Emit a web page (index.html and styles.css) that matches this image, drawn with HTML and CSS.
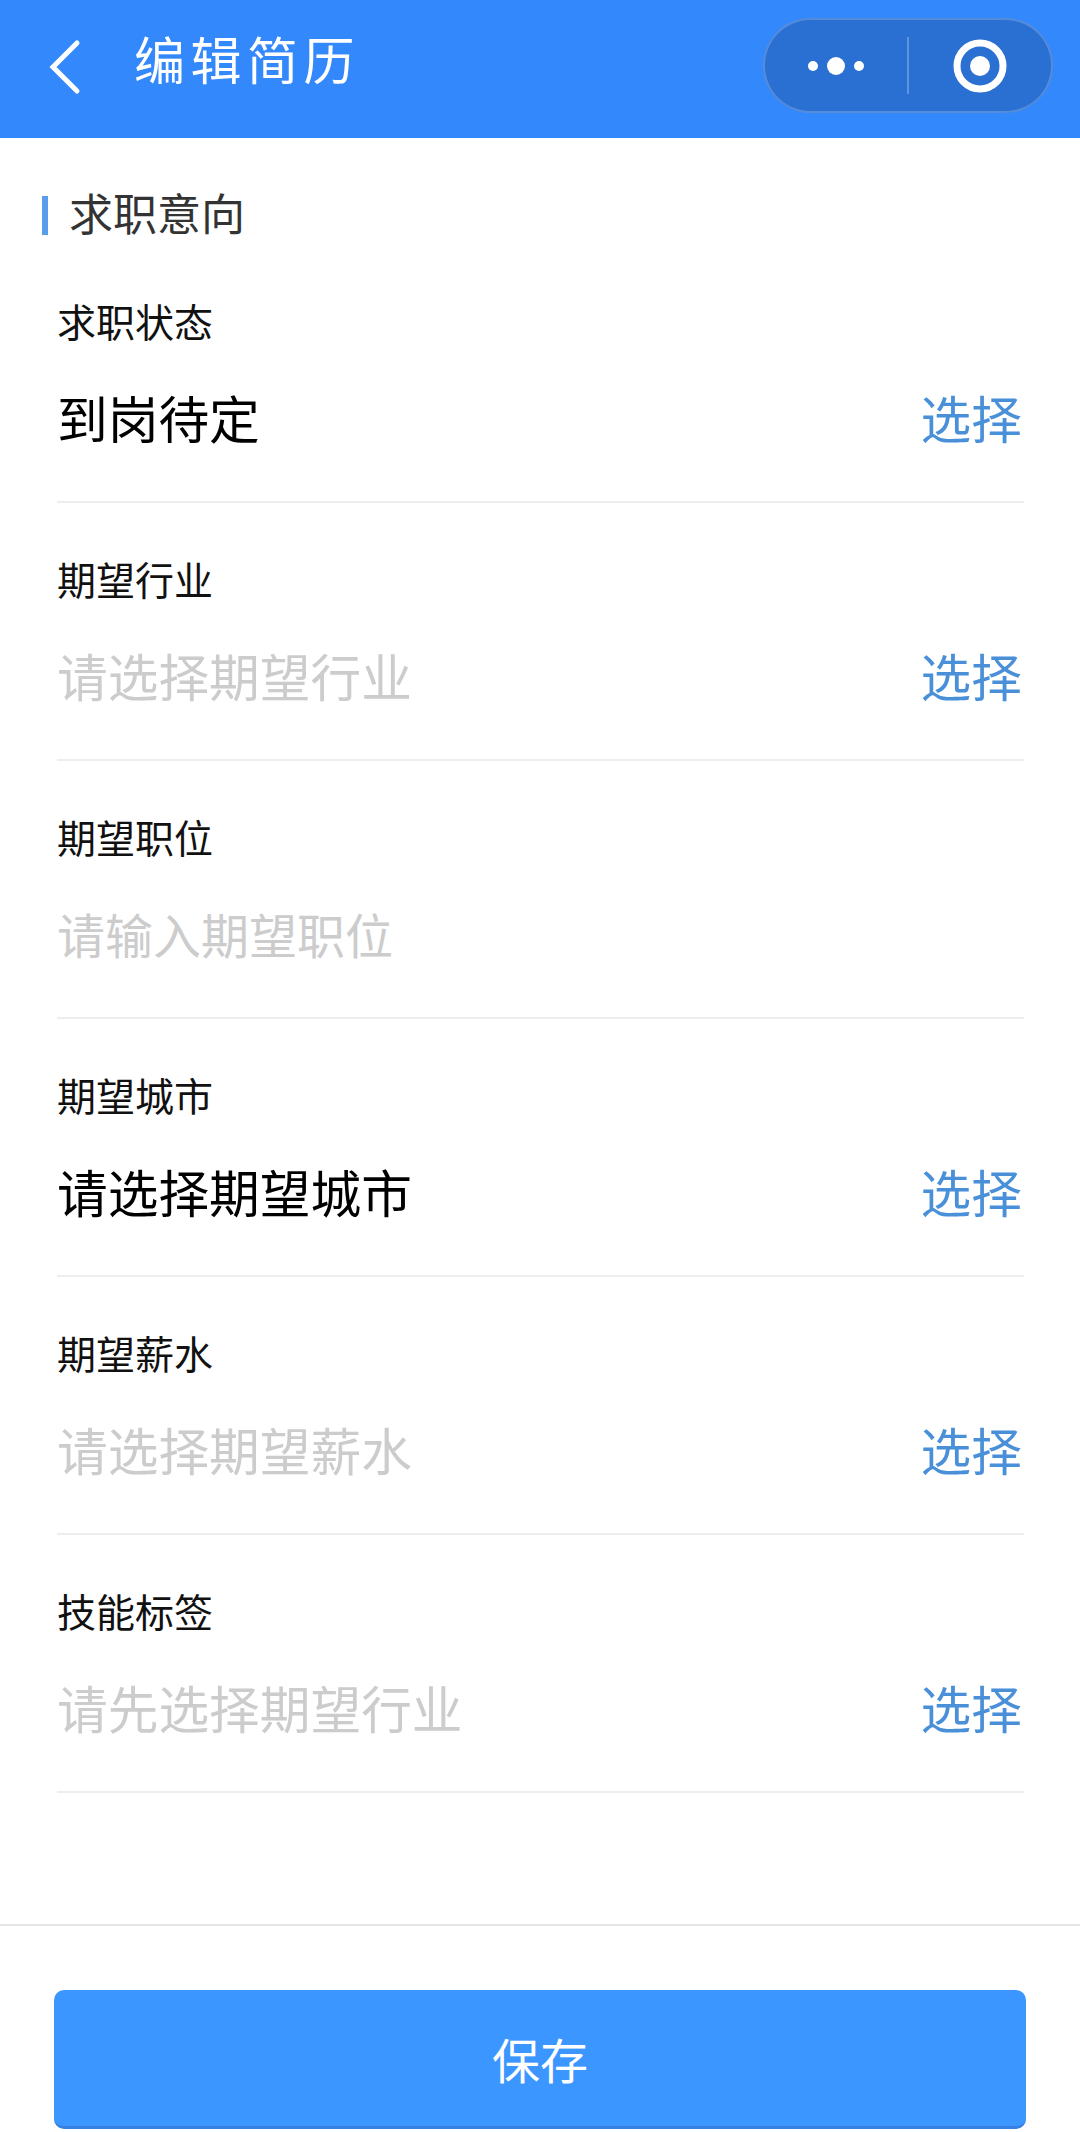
FILE: index.html
```html
<!DOCTYPE html>
<html lang="zh-CN">

<head>
    <meta charset="UTF-8">
    <meta name="viewport" content="width=device-width, initial-scale=1.0">
    <title>编辑简历</title>
    <link rel="stylesheet" href="styles.css">
</head>

<body>
    <header class="nav-bar">
        <svg class="back-icon" width="34" height="56" viewBox="0 0 34 56">
            <path d="M29 4 L5 28 L29 52" fill="none" stroke="#fff" stroke-width="5" stroke-linecap="round" stroke-linejoin="miter" />
        </svg>
        <h1 class="nav-title">编辑简历</h1>
        <div class="capsule">
            <div class="capsule-part">
                <svg width="70" height="24" viewBox="0 0 70 24">
                    <circle cx="12" cy="12" r="5" fill="#fff" />
                    <circle cx="35" cy="12" r="9" fill="#fff" />
                    <circle cx="58" cy="12" r="5" fill="#fff" />
                </svg>
            </div>
            <div class="capsule-line"></div>
            <div class="capsule-part">
                <svg width="54" height="54" viewBox="0 0 54 54">
                    <circle cx="27" cy="27" r="23" fill="none" stroke="#fff" stroke-width="7" />
                    <circle cx="27" cy="27" r="10" fill="#fff" />
                </svg>
            </div>
        </div>
    </header>

    <main class="content">
        <div class="section-title">求职意向</div>

        <div class="form-row">
            <div class="row-label">求职状态</div>
            <div class="row-body">
                <span class="row-value">到岗待定</span>
                <span class="row-action">选择</span>
            </div>
        </div>
        <div class="form-row">
            <div class="row-label">期望行业</div>
            <div class="row-body">
                <span class="row-value placeholder">请选择期望行业</span>
                <span class="row-action">选择</span>
            </div>
        </div>
        <div class="form-row">
            <div class="row-label">期望职位</div>
            <div class="row-body">
                <span class="row-value placeholder input-text">请输入期望职位</span>
            </div>
        </div>
        <div class="form-row">
            <div class="row-label">期望城市</div>
            <div class="row-body">
                <span class="row-value">请选择期望城市</span>
                <span class="row-action">选择</span>
            </div>
        </div>
        <div class="form-row">
            <div class="row-label">期望薪水</div>
            <div class="row-body">
                <span class="row-value placeholder">请选择期望薪水</span>
                <span class="row-action">选择</span>
            </div>
        </div>
        <div class="form-row">
            <div class="row-label">技能标签</div>
            <div class="row-body">
                <span class="row-value placeholder">请先选择期望行业</span>
                <span class="row-action">选择</span>
            </div>
        </div>
    </main>

    <footer class="footer">
        <button class="save-btn" type="button">保存</button>
    </footer>
</body>

</html>
```

FILE: styles.css
```css
* {
    box-sizing: border-box;
}

body {
    font-family: "Liberation Sans", "Noto Sans CJK SC", sans-serif;
    background-color: #fff;
    margin: 0;
    padding: 0;
    height: 2132px;
    display: flex;
    flex-direction: column;
    overflow: hidden;
}

.nav-bar {
    height: 138px;
    flex-shrink: 0;
    background-color: #3388fb;
    display: flex;
    align-items: center;
    padding-left: 48px;
    padding-right: 27px;
}

.back-icon {
    margin-top: -4px;
}

.nav-title {
    margin: -12px 0 0 52px;
    font-size: 51px;
    font-weight: 400;
    letter-spacing: 5.5px;
    line-height: 60px;
    color: #fff;
}

.capsule {
    margin-left: auto;
    width: 290px;
    height: 95px;
    margin-top: -7px;
    background-color: #2a6fd2;
    border: 2px solid rgba(255, 255, 255, 0.2);
    border-radius: 48px;
    display: flex;
    align-items: center;
}

.capsule-part {
    flex: 1;
    display: flex;
    justify-content: center;
    align-items: center;
}

.capsule-line {
    width: 2px;
    height: 57px;
    background-color: rgba(255, 255, 255, 0.25);
}

.content {
    flex: 1;
    padding: 0 56px 0 57px;
}

.section-title {
    margin: 58px 0 10px -15px;
    padding-left: 21px;
    border-left: 6px solid #5b9ded;
    font-size: 44px;
    line-height: 39px;
    height: 39px;
    color: #333;
}

.form-row {
    height: 258px;
    border-bottom: 2px solid #eee;
    padding-top: 57px;
}

.row-label {
    font-size: 39px;
    line-height: 44px;
    color: #111;
}

.row-body {
    margin-top: 41px;
    display: flex;
    justify-content: space-between;
    align-items: center;
    height: 70px;
}

.row-value {
    font-size: 50.7px;
    line-height: 70px;
    color: #000;
}

.placeholder {
    color: #ccc;
}

.input-text {
    font-size: 48px;
}

.row-action {
    margin-right: 2px;
    font-size: 50.7px;
    line-height: 70px;
    color: #4a90d9;
}

.footer {
    flex-shrink: 0;
    height: 208px;
    border-top: 2px solid #e5e5e5;
    padding: 64px 54px 0;
}

.save-btn {
    display: block;
    width: 100%;
    height: 139px;
    background-color: #3c96ff;
    color: #fff;
    border: none;
    border-bottom: 3px solid #3580e0;
    border-radius: 10px;
    font-family: inherit;
    font-size: 48px;
    padding: 0;
}
```
